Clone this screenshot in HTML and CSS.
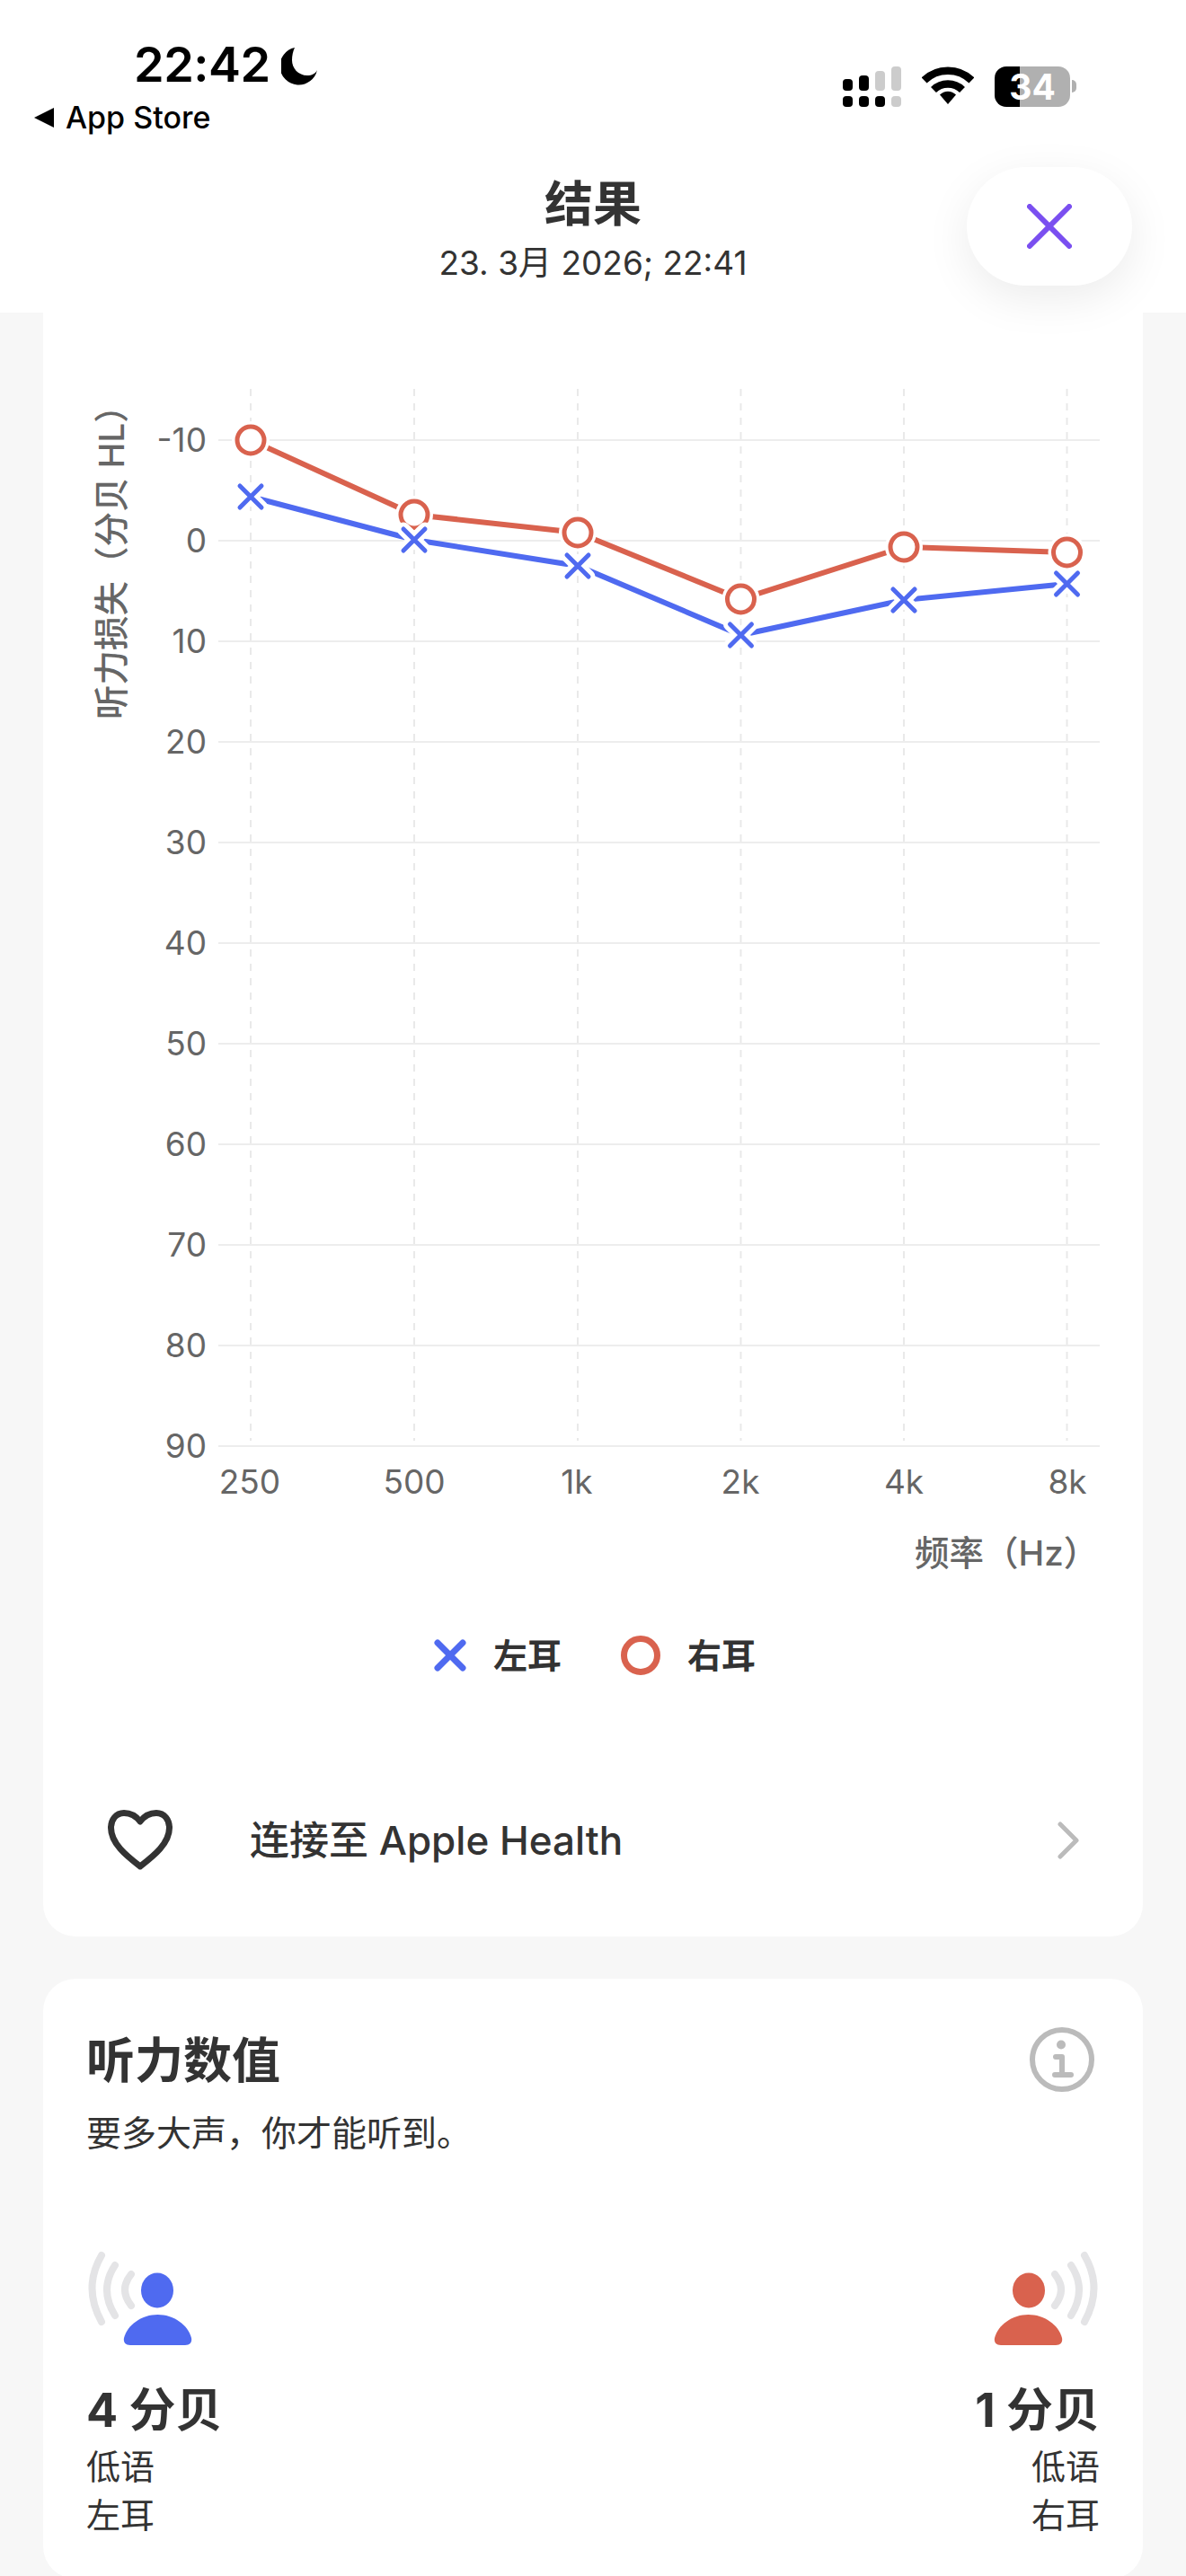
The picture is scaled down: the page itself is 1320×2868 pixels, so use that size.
FILE: index.html
```html
<!DOCTYPE html>
<html lang="zh">
<head>
    <meta charset="utf-8">
    <title>结果</title>
    <link rel="stylesheet" href="styles.css">
</head>
<body>
    <header class="top">
        <div class="status">
            <div class="status-left">
                <div class="clock">
                    <span class="time">22:42</span>
                    <svg class="moon" viewBox="0 0 40 43"><path d="M15 1A21 21 0 1 0 40 26C38 30 34 32 29 32C19 32 12 24 12 15C12 10 13 5 15 1Z"/></svg>
                </div>
                <div class="back"><span class="back-arrow"></span>App Store</div>
            </div>
            <div class="status-right">
                <svg class="signal" viewBox="0 0 65 45">
                    <rect x="0" y="14" width="11" height="13" rx="4"/>
                    <rect x="18" y="10" width="11" height="17" rx="4"/>
                    <rect class="off" x="36" y="5" width="11" height="22" rx="4"/>
                    <rect class="off" x="54" y="0" width="11" height="27" rx="4"/>
                    <rect x="0" y="33" width="11" height="12" rx="4"/>
                    <rect x="18" y="33" width="11" height="12" rx="4"/>
                    <rect x="36" y="33" width="11" height="12" rx="4"/>
                    <rect class="off" x="54" y="33" width="11" height="12" rx="4"/>
                </svg>
                <svg class="wifi" viewBox="0 0 58 42">
                    <path d="M2.6 15.5A38 38 0 0 1 55.4 15.5" fill="none" stroke="#000" stroke-width="8.5"/>
                    <path d="M13 26A23 23 0 0 1 45 26" fill="none" stroke="#000" stroke-width="8.5"/>
                    <path d="M20 31.5A12.5 12.5 0 0 1 38 31.5L29 42Z"/>
                </svg>
                <div class="battery"><span class="battery-level">34</span></div>
                <span class="battery-nub"></span>
            </div>
        </div>
        <div class="heading">
            <h1>结果</h1>
            <p>23. 3月 2026; 22:41</p>
        </div>
        <button class="close" type="button">
            <svg viewBox="0 0 50 50"><path d="M3 3L47 47M47 3L3 47"/></svg>
        </button>
    </header>

    <section class="card card-chart">
        <svg class="chart" viewBox="48 348 1224 1420">
            <g class="v-lines">
                <path d="M279 433V1604"/>
                <path d="M461 433V1604"/>
                <path d="M643 433V1604"/>
                <path d="M824.5 433V1604"/>
                <path d="M1006 433V1604"/>
                <path d="M1187.5 433V1604"/>
            </g>
            <g class="h-lines">
                <path d="M243 490H1224"/>
                <path d="M243 602H1224"/>
                <path d="M243 714H1224"/>
                <path d="M243 826H1224"/>
                <path d="M243 938H1224"/>
                <path d="M243 1050H1224"/>
                <path d="M243 1162H1224"/>
                <path d="M243 1274H1224"/>
                <path d="M243 1386H1224"/>
                <path d="M243 1498H1224"/>
                <path d="M243 1610H1224"/>
            </g>
            <g class="y-labels">
                <text x="230" y="503">-10</text>
                <text x="230" y="615">0</text>
                <text x="230" y="727">10</text>
                <text x="230" y="839">20</text>
                <text x="230" y="951">30</text>
                <text x="230" y="1063">40</text>
                <text x="230" y="1175">50</text>
                <text x="230" y="1287">60</text>
                <text x="230" y="1399">70</text>
                <text x="230" y="1511">80</text>
                <text x="230" y="1623">90</text>
            </g>
            <g class="x-labels">
                <text x="278" y="1663">250</text>
                <text x="461" y="1663">500</text>
                <text x="642" y="1663">1k</text>
                <text x="824" y="1663">2k</text>
                <text x="1006" y="1663">4k</text>
                <text x="1188" y="1663">8k</text>
            </g>
            <text class="axis-title" transform="translate(138 801) rotate(-90)">听力损失（分贝 HL）</text>
            <text class="axis-title" x="1018" y="1743">频率（Hz）</text>

            <polyline class="line line-right" points="279,490 461,573 643,593 824.5,667 1006,609 1187.5,615"/>
            <polyline class="line line-left" points="279,553 461,601 643,630 824.5,707 1006,668 1187.5,650"/>

            <g class="marks-right">
                <circle class="halo" cx="279" cy="490" r="21"/>
                <circle class="halo" cx="461" cy="573" r="21"/>
                <circle class="halo" cx="643" cy="593" r="21"/>
                <circle class="halo" cx="824.5" cy="667" r="21"/>
                <circle class="halo" cx="1006" cy="609" r="21"/>
                <circle class="halo" cx="1187.5" cy="615" r="21"/>
                <circle cx="279" cy="490" r="15"/>
                <circle cx="461" cy="573" r="15"/>
                <circle cx="643" cy="593" r="15"/>
                <circle cx="824.5" cy="667" r="15"/>
                <circle cx="1006" cy="609" r="15"/>
                <circle cx="1187.5" cy="615" r="15"/>
            </g>
            <g class="marks-left">
                <path class="halo" d="M279 553m-12 -12l24 24m0 -24l-24 24"/>
                <path class="halo" d="M461 601m-12 -12l24 24m0 -24l-24 24"/>
                <path class="halo" d="M643 630m-12 -12l24 24m0 -24l-24 24"/>
                <path class="halo" d="M824.5 707m-12 -12l24 24m0 -24l-24 24"/>
                <path class="halo" d="M1006 668m-12 -12l24 24m0 -24l-24 24"/>
                <path class="halo" d="M1187.5 650m-12 -12l24 24m0 -24l-24 24"/>
                <path d="M279 553m-12 -12l24 24m0 -24l-24 24"/>
                <path d="M461 601m-12 -12l24 24m0 -24l-24 24"/>
                <path d="M643 630m-12 -12l24 24m0 -24l-24 24"/>
                <path d="M824.5 707m-12 -12l24 24m0 -24l-24 24"/>
                <path d="M1006 668m-12 -12l24 24m0 -24l-24 24"/>
                <path d="M1187.5 650m-12 -12l24 24m0 -24l-24 24"/>
            </g>
        </svg>

        <div class="legend">
            <div class="legend-item">
                <svg class="legend-x" viewBox="0 0 36 36"><path d="M4 4L32 32M32 4L4 32"/></svg>
                <span>左耳</span>
            </div>
            <div class="legend-item">
                <svg class="legend-o" viewBox="0 0 44 44"><circle cx="22" cy="22" r="18.5"/></svg>
                <span>右耳</span>
            </div>
        </div>

        <div class="health-row">
            <svg class="heart" viewBox="0 0 72 67"><path d="M36 13C30 5 23 3.5 18 3.5C9 3.5 3.5 11 3.5 20C3.5 38 22 52 36 63C50 52 68.500 38 68.500 20C68.500 11 63 3.5 54 3.500C49 3.500 42 5 36 13Z"/></svg>
            <span class="health-text">连接至 Apple Health</span>
            <svg class="chevron" viewBox="0 0 24 42"><path d="M3 3L21 21L3 39"/></svg>
        </div>
    </section>

    <section class="card card-values">
        <div class="values-head">
            <div>
                <h2>听力数值</h2>
                <p>要多大声，你才能听到。</p>
            </div>
            <svg class="info" viewBox="0 0 72 72">
                <circle cx="36" cy="36" r="33"/>
                <circle class="dot" cx="35" cy="19.500" r="5"/>
                <path d="M29 33H36V53M28 53H46"/>
            </svg>
        </div>
        <div class="ears">
            <div class="ear">
                <svg class="person person-left" viewBox="0 0 120 104">
                    <g class="waves">
                        <path d="M17 5Q-4 41 17 79"/>
                        <path d="M32 16Q14 43 32 72"/>
                        <path d="M50 26Q36 43 50 61"/>
                    </g>
                    <ellipse cx="79" cy="44" rx="18" ry="19.500"/>
                    <path d="M42 97C46 82 62 71 79.500 71C97 71 113 82 117 97C118 102 115 105 110 105H49C44 105 41 102 42 97Z"/>
                </svg>
                <div class="ear-value">4 分贝</div>
                <div class="ear-note">低语</div>
                <div class="ear-note">左耳</div>
            </div>
            <div class="ear ear-right">
                <svg class="person person-right" viewBox="0 0 120 104">
                    <g class="waves">
                        <path d="M17 5Q-4 41 17 79"/>
                        <path d="M32 16Q14 43 32 72"/>
                        <path d="M50 26Q36 43 50 61"/>
                    </g>
                    <ellipse cx="79" cy="44" rx="18" ry="19.500"/>
                    <path d="M42 97C46 82 62 71 79.500 71C97 71 113 82 117 97C118 102 115 105 110 105H49C44 105 41 102 42 97Z"/>
                </svg>
                <div class="ear-value">1 分贝</div>
                <div class="ear-note">低语</div>
                <div class="ear-note">右耳</div>
            </div>
        </div>
    </section>
</body>
</html>
```

FILE: styles.css
```css
html, body {
    margin: 0;
    height: 2868px;
    overflow: hidden;
}

body {
    width: 1320px;
    background-color: #f7f7f7;
    color: #333;
    font-family: Inter, "Noto Sans CJK SC", sans-serif;
}

svg {
    display: block;
}

/* top bar */

.top {
    position: relative;
    z-index: 2;
    height: 348px;
    background-color: #fff;
}

.status {
    display: flex;
    justify-content: space-between;
    height: 190px;
    padding: 40px 122px 0 38px;
    box-sizing: border-box;
    color: #000;
}

.clock {
    display: flex;
    align-items: flex-start;
    margin-left: 111px;
}

.time {
    font-size: 54px;
    line-height: 64px;
    font-weight: 600;
    letter-spacing: -0.5px;
}

.moon {
    width: 40px;
    height: 43px;
    margin: 12px 0 0 12px;
}

.back {
    display: flex;
    align-items: center;
    margin-top: 8px;
    font-size: 34px;
    line-height: 38px;
    font-weight: 500;
}

.back-arrow {
    width: 0;
    height: 0;
    margin-right: 13px;
    border-style: solid;
    border-width: 11px 22px 11px 0;
    border-color: transparent #000 transparent transparent;
}

.status-right {
    display: flex;
    align-items: flex-start;
    padding-top: 34px;
}

.signal {
    width: 65px;
    height: 45px;
    fill: #000;
}

.signal .off {
    fill: #ccc;
}

.wifi {
    width: 58px;
    height: 42px;
    margin-left: 23px;
}

.battery {
    width: 84px;
    height: 45px;
    margin-left: 23px;
    border-radius: 13px;
    background: linear-gradient(90deg, #000 28px, #b0b0b0 28px);
    color: #fff;
    font-size: 39px;
    line-height: 45px;
    font-weight: 700;
    text-align: center;
}

.battery-nub {
    width: 5px;
    height: 14px;
    margin: 15px 0 0 2px;
    border-radius: 0 5px 5px 0;
    background-color: #b0b0b0;
}

.heading {
    text-align: center;
}

.heading h1 {
    margin: 0;
    font-size: 54px;
    line-height: 76px;
    font-weight: 700;
}

.heading p {
    margin: 3px 0 0;
    font-size: 37px;
    line-height: 48px;
}

.close {
    position: absolute;
    top: 186px;
    left: 1076px;
    display: flex;
    align-items: center;
    justify-content: center;
    width: 184px;
    height: 132px;
    padding: 0;
    border: 0;
    border-radius: 66px;
    background-color: #fff;
    box-shadow: 0 14px 50px rgba(0, 0, 0, 0.08);
}

.close svg {
    width: 50px;
    height: 50px;
    fill: none;
    stroke: #7a4ff0;
    stroke-width: 6;
    stroke-linecap: round;
}

/* cards */

.card {
    margin: 0 48px;
    background-color: #fff;
    border-radius: 36px;
}

.card-chart {
    height: 1808px;
    border-radius: 0 0 36px 36px;
}

.card-values {
    height: 668px;
    margin-top: 47px;
    padding: 54px 48px 0;
    box-sizing: border-box;
}

/* chart */

.chart {
    width: 1224px;
    height: 1420px;
}

.chart text {
    font-size: 37px;
    fill: #666;
}

.v-lines path {
    stroke: #e9e9e9;
    stroke-width: 2;
    stroke-dasharray: 8 8;
}

.h-lines path {
    stroke: #ededed;
    stroke-width: 2;
}

.y-labels text {
    text-anchor: end;
}

.x-labels text {
    text-anchor: middle;
}

.chart .axis-title {
    font-size: 38.5px;
    font-weight: 500;
}

.line {
    fill: none;
    stroke-width: 6;
}

.line-right {
    stroke: #d9624e;
}

.line-left {
    stroke: #4f6af0;
}

.marks-left path {
    fill: none;
    stroke: #4f6af0;
    stroke-width: 5;
    stroke-linecap: round;
}

.marks-left .halo {
    stroke: #fff;
    stroke-width: 15;
}

.marks-right circle {
    fill: #fff;
    stroke: #d9624e;
    stroke-width: 5;
}

.marks-right .halo {
    stroke: none;
}

.legend {
    display: flex;
    justify-content: center;
    gap: 66px;
    margin-top: 53px;
    padding-left: 4px;
}

.legend-item {
    display: flex;
    align-items: center;
    gap: 30px;
    font-size: 38px;
    line-height: 44px;
    font-weight: 700;
}

.legend-x {
    width: 36px;
    height: 36px;
    fill: none;
    stroke: #4f6af0;
    stroke-width: 7;
    stroke-linecap: round;
}

.legend-o {
    width: 44px;
    height: 44px;
    fill: none;
    stroke: #d9624e;
    stroke-width: 7;
}

.health-row {
    display: flex;
    align-items: center;
    margin-top: 150px;
    padding: 0 71px 0 72px;
}

.heart {
    width: 72px;
    height: 67px;
    fill: none;
    stroke: #333;
    stroke-width: 7;
    stroke-linejoin: round;
}

.health-text {
    flex: 1;
    margin-left: 86px;
    font-size: 44px;
    line-height: 60px;
    font-weight: 500;
}

.chevron {
    width: 24px;
    height: 42px;
    fill: none;
    stroke: #bbb;
    stroke-width: 5;
    stroke-linecap: round;
    stroke-linejoin: round;
}

/* hearing values */

.values-head {
    display: flex;
    justify-content: space-between;
    align-items: flex-start;
}

.values-head h2 {
    margin: 0;
    font-size: 54px;
    line-height: 76px;
    font-weight: 700;
}

.values-head p {
    margin: 17px 0 0;
    font-size: 39px;
    line-height: 50px;
}

.info {
    width: 72px;
    height: 72px;
    margin-right: 6px;
    fill: none;
    stroke: #bbb;
    stroke-width: 6;
    stroke-linecap: round;
    stroke-linejoin: round;
}

.info .dot {
    fill: #bbb;
    stroke: none;
}

.ears {
    display: flex;
    justify-content: space-between;
    margin-top: 106px;
}

.ear-right {
    text-align: right;
}

.person {
    width: 120px;
    height: 104px;
    overflow: visible;
}

.person-left {
    fill: #4f6af0;
}

.person-right {
    margin-left: auto;
    fill: #d9624e;
    transform: scaleX(-1);
}

.waves path {
    fill: none;
    stroke: #e4e4e6;
    stroke-width: 8;
    stroke-linecap: round;
}

.ear-value {
    margin-top: 39px;
    font-size: 52px;
    line-height: 70px;
    font-weight: 700;
}

.ear-note {
    font-size: 38px;
    line-height: 54px;
}
```
